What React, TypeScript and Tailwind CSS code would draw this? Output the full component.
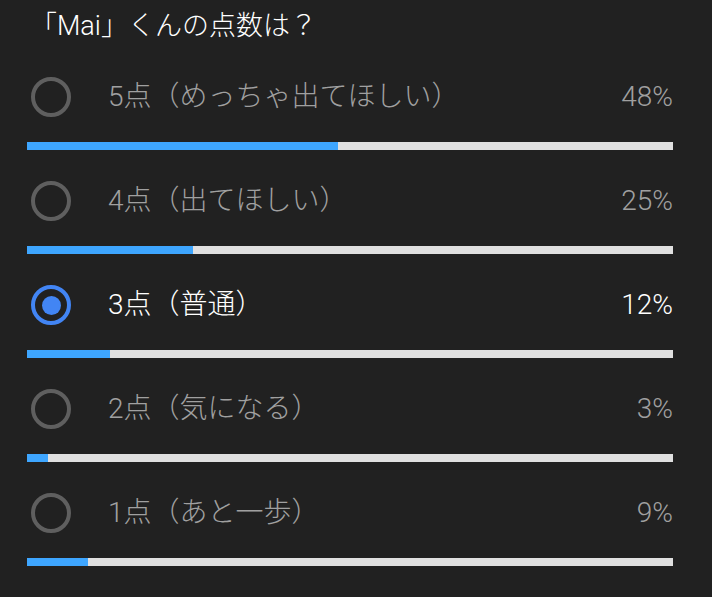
const options = [
  { label: "5点（めっちゃ出てほしい）", pct: "48%", fill: 48.1 },
  { label: "4点（出てほしい）", pct: "25%", fill: 25.7 },
  { label: "3点（普通）", pct: "12%", fill: 12.8, selected: true },
  { label: "2点（気になる）", pct: "3%", fill: 3.3 },
  { label: "1点（あと一歩）", pct: "9%", fill: 9.4 },
];

function Radio({ selected }: { selected?: boolean }) {
  if (selected) {
    return (
      <div className="w-10 h-10 rounded-full border-4 border-[#4285f4] flex items-center justify-center">
        <div className="w-[19px] h-[19px] rounded-full bg-[#4285f4]" />
      </div>
    );
  }
  return <div className="w-10 h-10 rounded-full border-4 border-[#5f5f5f]" />;
}

export default function App() {
  return (
    <div
      className="w-[712px] h-[597px] bg-[#212121] overflow-hidden font-light"
      style={{ fontFamily: "Roboto, 'Noto Sans CJK JP', sans-serif" }}
    >
      <div className="h-[52px] flex items-center pl-[30px] text-[27px] text-white">
        「Mai」くんの点数は？
      </div>

      <div className="mt-[17px] pl-[27px] pr-[39px]">
        {options.map((o) => (
          <div key={o.label} className="pb-[23px]">
            <div className="h-14 flex items-center">
              <div className="ml-[4px]">
                <Radio selected={o.selected} />
              </div>
              <div
                className={
                  "ml-[37px] flex-1 text-[28px] leading-none " +
                  (o.selected ? "text-white" : "text-[#a0a0a0]")
                }
              >
                {o.label}
              </div>
              <div
                className={
                  "text-[28px] leading-none " +
                  (o.selected ? "text-white" : "text-[#a0a0a0]")
                }
              >
                {o.pct}
              </div>
            </div>
            <div className="mt-[17px] h-2 bg-[#e0e0e0] flex">
              <div className="h-full bg-[#3ea6ff]" style={{ width: `${o.fill}%` }} />
            </div>
          </div>
        ))}
      </div>
    </div>
  );
}
